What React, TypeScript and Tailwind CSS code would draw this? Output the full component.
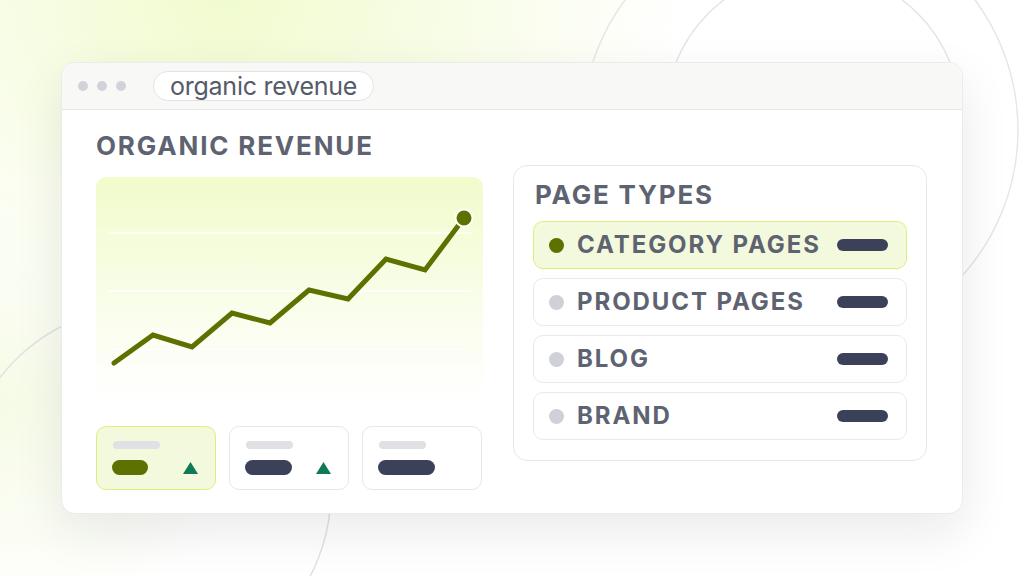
const font = { fontFamily: "Inter, 'Noto Sans', sans-serif" }

const pagePoints = "18,186 57,158 96,170 136,136 174,146 213,113 252,122 290,82 329,93 368,41"

type Row = { label: string; active?: boolean }

const rows: Row[] = [
  { label: "CATEGORY PAGES", active: true },
  { label: "PRODUCT PAGES" },
  { label: "BLOG" },
  { label: "BRAND" },
]

function Triangle() {
  return (
    <svg width="15" height="12" viewBox="0 0 15 12">
      <polygon points="7.5,0 15,12 0,12" fill="#0f7a55" />
    </svg>
  )
}

function StatCard({ active, pill, arrow }: { active?: boolean; pill: number; arrow?: boolean }) {
  return (
    <div
      className={
        "w-[120px] h-[64px] rounded-[10px] border pl-[15px] pr-[17px] pt-[14px] " +
        (active ? "bg-[#f3f9dc] border-[#dcef7e]" : "bg-white border-[#e7e7e7]")
      }
    >
      <div className="ml-[1px] w-[47px] h-[8px] rounded-full bg-[#e0e1e5]" />
      <div className="mt-[11px] flex items-center justify-between">
        <div
          className={"h-[15px] rounded-full " + (active ? "bg-[#5c7100]" : "bg-[#3a4158]")}
          style={{ width: pill }}
        />
        {arrow && <Triangle />}
      </div>
    </div>
  )
}

export default function App() {
  return (
    <div className="relative w-[1024px] h-[576px] overflow-hidden bg-white" style={font}>
      {/* background glow + circle outlines */}
      <div className="absolute inset-0 bg-[radial-gradient(ellipse_45%_60%_at_22%_0%,#f1fbcf_0%,rgba(241,251,207,0)_100%)]" />
      <div className="absolute inset-0 bg-[radial-gradient(ellipse_25%_40%_at_0%_70%,#f6fbe6_0%,rgba(246,251,230,0)_100%)]" />
      <svg className="absolute inset-0" width="1024" height="576" viewBox="0 0 1024 576" fill="none">
        <circle cx="800" cy="130" r="218" stroke="#e6e6e6" strokeWidth="1.5" />
        <circle cx="813" cy="118" r="148" stroke="#e6e6e6" strokeWidth="1.5" />
        <circle cx="146" cy="491" r="185" stroke="#e2e2e2" strokeWidth="1.5" />
      </svg>

      <div className="relative pt-[62px] pl-[61px]">
        <div className="w-[902px] h-[452px] rounded-[14px] bg-white border border-[#ebebeb] shadow-[0_18px_50px_rgba(17,24,39,0.09)] overflow-hidden">
          {/* title bar */}
          <div className="h-[47px] bg-[#f8f8f6] border-b border-[#e7e7e7] flex items-center pl-[16px]">
            <div className="flex gap-[9px]">
              <div className="w-[10px] h-[10px] rounded-full bg-[#d2d3da]" />
              <div className="w-[10px] h-[10px] rounded-full bg-[#d2d3da]" />
              <div className="w-[10px] h-[10px] rounded-full bg-[#d2d3da]" />
            </div>
            <div className="ml-[27px] h-[30px] px-[16px] rounded-full bg-white border border-[#e3e3e3] flex items-center text-[25px] leading-none text-[#555b68] tracking-[-0.01em]">
              organic revenue
            </div>
          </div>

          {/* body */}
          <div className="flex pt-[23px] px-[34px] gap-[30px]">
            <div className="w-[387px] flex flex-col">
              <div className="h-[26px] text-[26px] leading-[26px] font-bold tracking-[0.07em] text-[#5e6371] whitespace-nowrap">
                ORGANIC REVENUE
              </div>
              <div className="mt-[18px] h-[222px] rounded-t-[10px] bg-gradient-to-b from-[#f1fbcb] via-[#f8fde6] to-white">
                <svg width="387" height="222" viewBox="0 0 387 222" fill="none">
                  <line x1="12" y1="56" x2="375" y2="56" stroke="#ffffff" strokeWidth="1.5" />
                  <line x1="12" y1="114" x2="375" y2="114" stroke="#ffffff" strokeWidth="1.5" />
                  <line x1="12" y1="172" x2="375" y2="172" stroke="#ffffff" strokeWidth="1" />
                  <polyline
                    points={pagePoints}
                    stroke="#5c7100"
                    strokeWidth="5"
                    strokeLinecap="round"
                    strokeLinejoin="miter"
                  />
                  <circle cx="368" cy="41" r="8.5" fill="#5c7100" stroke="#ffffff" strokeWidth="2" />
                </svg>
              </div>
              <div className="mt-[27px] flex gap-[13px]">
                <StatCard active pill={36} arrow />
                <StatCard pill={47} arrow />
                <StatCard pill={57} />
              </div>
            </div>

            <div className="mt-[32px] w-[414px] h-[296px] rounded-[14px] border border-[#e8e8e8] bg-white px-[19px] pt-[16px]">
              <div className="pl-[2px] h-[26px] text-[26px] leading-[26px] font-bold tracking-[0.07em] text-[#5e6371] whitespace-nowrap">
                PAGE TYPES
              </div>
              <div className="mt-[13px] flex flex-col gap-[9px]">
                {rows.map((r) => (
                  <div
                    key={r.label}
                    className={
                      "h-[48px] rounded-[10px] border flex items-center pl-[15px] pr-[18px] " +
                      (r.active ? "bg-[#f3f9dc] border-[#dcef7e]" : "bg-white border-[#e9e9e9]")
                    }
                  >
                    <div
                      className={
                        "w-[15px] h-[15px] rounded-full " + (r.active ? "bg-[#5c7100]" : "bg-[#cfd0d8]")
                      }
                    />
                    <div className="ml-[13px] text-[24px] leading-none font-bold tracking-[0.08em] text-[#5e6371] whitespace-nowrap">
                      {r.label}
                    </div>
                    <div className="ml-auto w-[51px] h-[12px] rounded-full bg-[#3a4158]" />
                  </div>
                ))}
              </div>
            </div>
          </div>
        </div>
      </div>
    </div>
  )
}
